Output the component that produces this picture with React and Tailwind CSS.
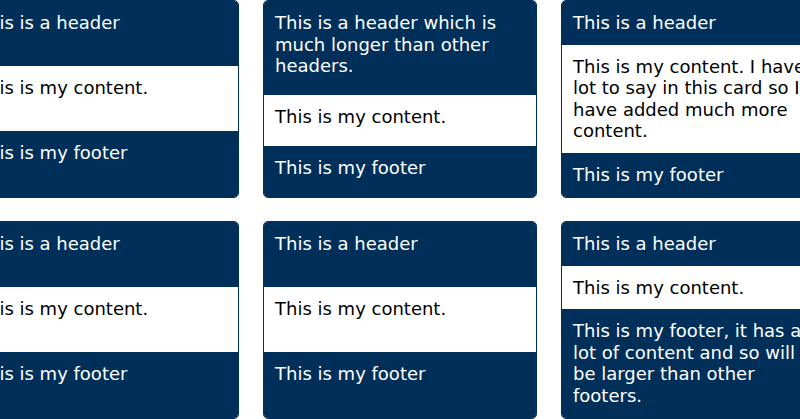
export default function App() {
  const cards = [
    { h: "This is a header", c: "This is my content.", f: "This is my footer" },
    { h: "This is a header which is much longer than other headers.", c: "This is my content.", f: "This is my footer" },
    { h: "This is a header", c: "This is my content. I have a lot to say in this card so I have added much more content.", f: "This is my footer" },
    { h: "This is a header", c: "This is my content.", f: "This is my footer" },
    { h: "This is a header", c: "This is my content.", f: "This is my footer" },
    { h: "This is a header", c: "This is my content.", f: "This is my footer, it has a lot of content and so will be larger than other footers." },
  ];
  return (
    <div className="w-[800px] h-[419px] overflow-hidden bg-white" style={{ fontFamily: '"DejaVu Sans", sans-serif' }}>
      <div className="grid grid-cols-3 gap-x-6 gap-y-[23.5px] w-[870px] ml-[-35px] text-[18px] leading-[1.2]">
        {cards.map((card, i) => (
          <div key={i} className="grid border border-[#00305a] rounded-[5px] overflow-hidden">
            <div className="bg-[#00305a] text-white p-[11px]">{card.h}</div>
            <div className="bg-white text-black p-[11px]">{card.c}</div>
            <div className="bg-[#00305a] text-white p-[11px]">{card.f}</div>
          </div>
        ))}
      </div>
    </div>
  );
}
